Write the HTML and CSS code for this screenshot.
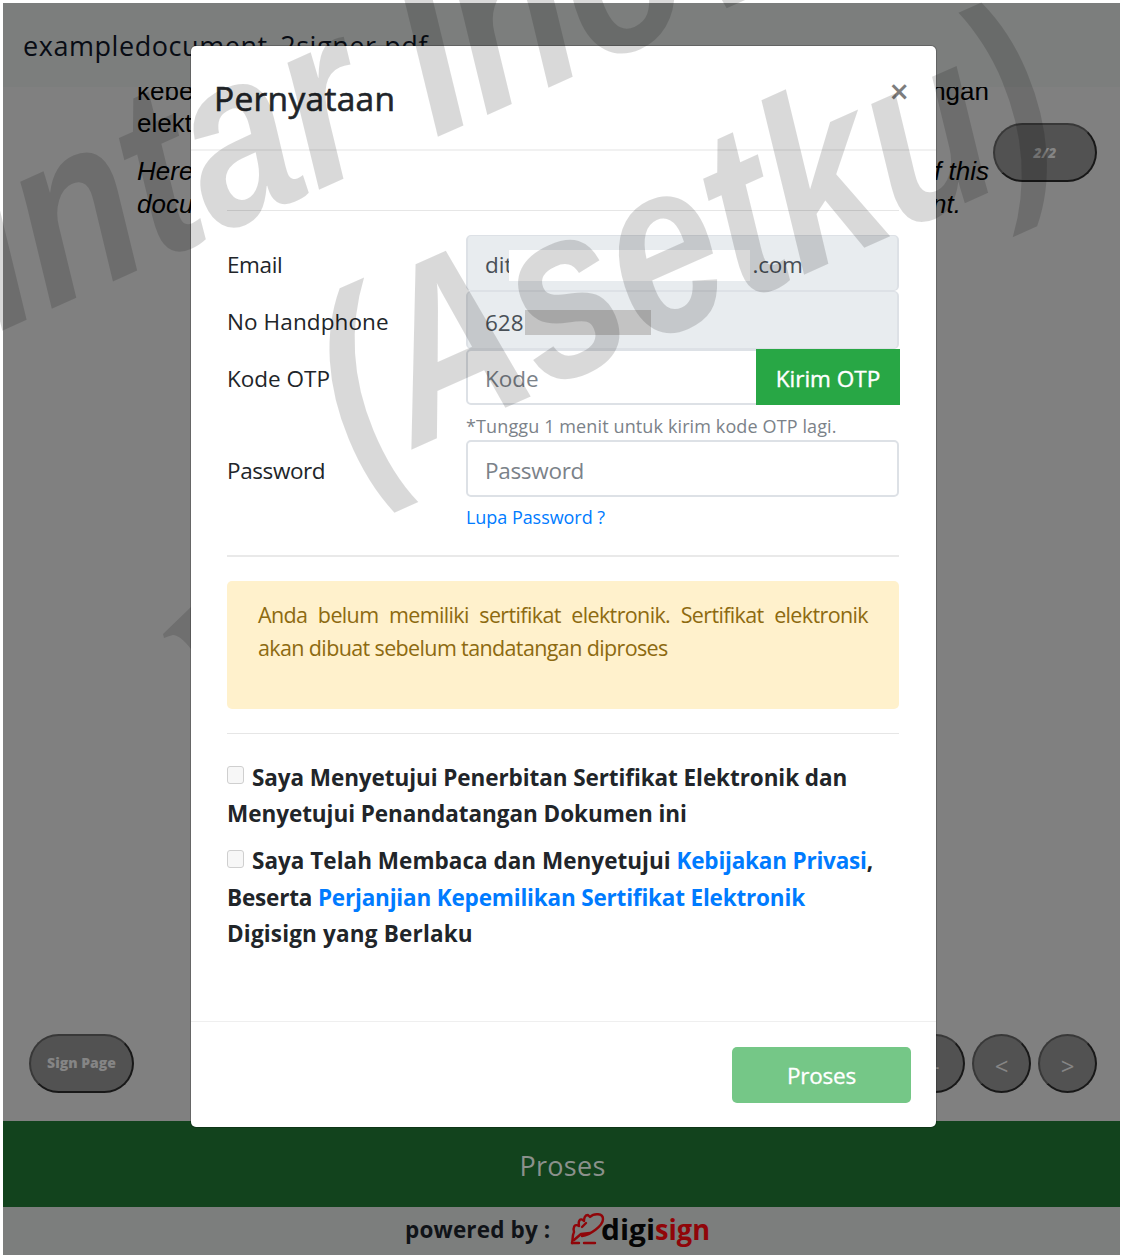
FILE: index.html
```html
<!DOCTYPE html>
<html lang="id">
<head>
<meta charset="utf-8">
<title>Pernyataan</title>
<link rel="stylesheet" href="styles.css">
</head>
<body>
<div class="page">
  <header class="topbar"><span class="filename">exampledocument_2signer.pdf</span></header>
  <main class="viewer">
    <div class="doc">
      <p class="line cut"><span>kebe</span><span>ngan</span></p>
      <p class="line l2"><span>elekt</span></p>
      <p class="line l3 it"><span>Here</span><span>f this</span></p>
      <p class="line l4 it"><span>docu</span><span class="nt">nt.</span></p>
    </div>
    <div class="pill pageno">2/2</div>
    <div class="tools">
      <div class="pill sign">Sign Page</div>
      <div class="group"><div class="pill round">-</div><div class="pill round">&lt;</div><div class="pill round">&gt;</div></div>
    </div>
    <svg class="speck" width="30" height="44" viewBox="0 0 30 44"><path d="M0 28 28 1V43Q17 29 10 29 6 30 1 32Z" fill="#6f6f6f"/></svg>
  </main>
  <div class="process">Proses</div>
  <footer class="powered"><b>powered by :</b>
    <svg class="logo" width="142" height="44" viewBox="0 0 142 44">
      <g fill="none" stroke="#900509" stroke-width="2.4" stroke-linejoin="round" stroke-linecap="round">
        <path d="M12 27C20 26 33 17 33 10 33 4 24 4 20 8L18 6C15 6 14 9 14 12 10 8 8 12 9 17 4 14 3 19 4 23 2 27 3 31 2 34"/>
        <path d="M4 31 11 25 20 24M12 18 16 14M2 34H9M14 34H25"/>
      </g>
      <text x="31" y="31" textLength="54" lengthAdjust="spacingAndGlyphs" fill="#050505">digi</text>
      <text x="85" y="31" textLength="55" lengthAdjust="spacingAndGlyphs" fill="#900509">sign</text>
    </svg>
  </footer>
</div>

<div class="modal">
  <div class="modal-head"><h1>Pernyataan</h1><span class="close">×</span></div>
  <div class="modal-body">
    <hr>
    <div class="form">
      <label class="t-mail">Email</label>
      <div class="field off"><span>dit</span><i class="mask white"></i><span class="com">.com</span></div>
      <label class="t-hp">No Handphone</label>
      <div class="field off second"><span>628</span><i class="mask grey"></i></div>
      <label class="t-otp">Kode OTP</label>
      <div class="field otp"><span class="ph">Kode</span><button class="send">Kirim OTP</button></div>
      <p class="note">*Tunggu 1 menit untuk kirim kode OTP lagi.</p>
      <label class="t-pw">Password</label>
      <div class="field pw"><span class="ph">Password</span></div>
      <p class="forgot"><a>Lupa Password ?</a></p>
    </div>
    <hr class="mid">
    <div class="alert"><div class="a1">Anda belum memiliki sertifikat elektronik. Sertifikat elektronik</div><div class="a2">akan dibuat sebelum tandatangan diproses</div></div>
    <hr class="low">
    <div class="agree">
      <div class="row r1"><i class="box"></i><span>Saya Menyetujui Penerbitan Sertifikat Elektronik dan</span></div>
      <div class="row r2"><span>Menyetujui Penandatangan Dokumen ini</span></div>
      <div class="row r3"><i class="box"></i><span>Saya Telah Membaca dan Menyetujui <a>Kebijakan Privasi</a>,</span></div>
      <div class="row r4"><span>Beserta <a>Perjanjian Kepemilikan Sertifikat Elektronik</a></span></div>
      <div class="row r5"><span>Digisign yang Berlaku</span></div>
    </div>
  </div>
  <div class="modal-foot"><button class="submit">Proses</button></div>
</div>

<svg class="watermark" width="1122" height="1255" viewBox="0 0 1122 1255">
  <g transform="translate(415 448) rotate(-24) skewX(-1.5) scale(1 1.25)">
    <text x="-470" y="-220">Pintar Inovasi</text>
    <text x="-65" y="0">(Asetku)</text>
  </g>
</svg>
</body>
</html>
```
FILE: styles.css
```css
* { box-sizing: border-box; }
html, body { margin: 0; height: 1255px; overflow: hidden; background: #fff; }
body { position: relative; font-family: "Open Sans", "Noto Sans", sans-serif; font-size: 22.5px; color: #212529; }
p, h1 { margin: 0; font-weight: normal; }
button { font: inherit; border: 0; padding: 0; }
a { color: #007bff; }

.page { display: flex; flex-direction: column; height: 1255px; padding: 3px 2px 0 3px; }
.topbar { height: 84px; background: #7c7e7d; padding: 24px 0 0 20px; line-height: 38px; font-size: 27px; letter-spacing: .56px; color: #080c14; }
.viewer { position: relative; display: flex; flex-direction: column; height: 1034px; background: #808080; overflow: hidden; }
.doc { width: 852px; margin-left: 134px; font: 26px/33px "Liberation Sans", sans-serif; color: #000; }
.line { display: flex; justify-content: space-between; height: 33px; }
.cut { margin-top: -12px; }
.l2 { margin-top: -1px; }
.l3 { margin-top: 15px; }
.it { font-style: italic; }
.nt { margin-right: 28px; }
.pill { display: flex; align-items: center; justify-content: center; height: 59px; border: 2px solid; border-color: #383838 #181818 #181818 #383838; border-radius: 30px; background: #525252; color: #858585; font-size: 14px; font-weight: 800; }
.pageno { position: absolute; right: 23px; top: 36px; width: 104px; font-style: italic; }
.tools { display: flex; justify-content: space-between; margin: auto 23px 28px 26px; }
.sign { width: 105px; padding-bottom: 2px; }
.group { display: flex; gap: 7px; }
.round { width: 59px; padding-top: 4px; font-size: 24px; font-weight: 400; }
.speck { position: absolute; left: 160px; top: 519px; }
.process { height: 86px; background: #12431d; color: #8b918c; font-size: 27px; letter-spacing: .3px; line-height: 90px; padding-left: 2px; text-align: center; }
.powered { display: flex; align-items: center; flex: 1; background: #7c7e7d; padding-left: 402px; color: #101318; }
.powered b { width: 165px; padding-bottom: 3px; letter-spacing: .15px; white-space: nowrap; }
.logo text { font: 700 29px "Open Sans", sans-serif; }

.modal { position: absolute; left: 191px; top: 46px; width: 745px; height: 1081px; display: flex; flex-direction: column; background: #fff; border-radius: 5px; box-shadow: 0 0 0 1px rgba(0,0,0,.2); }
.modal-head { display: flex; justify-content: space-between; height: 105px; padding: 28px 27px 0 23px; border-bottom: 2px solid #f1f1f1; }
h1 { font-size: 33.500px; line-height: 48px; letter-spacing: .3px; -webkit-text-stroke: .6px #212529; }
.close { font-size: 34px; line-height: 34px; font-weight: 600; color: #7d7d7d; }
.modal-body { display: flex; flex-direction: column; flex: 1; padding: 59px 37px 0 36px; }
hr { width: 100%; height: 1px; margin: 0; border: 0; background: #e6e6e6; }
.form { display: grid; grid-template-columns: 239px 433px; grid-template-rows: 56px 58px 56px 35px 57px 42px; margin-top: 24px; }
label { align-self: center; white-space: nowrap; padding-top: 2px; }
.t-mail { letter-spacing: -.4px; }
.t-hp { letter-spacing: .1px; }
.t-pw { padding-top: 3px; letter-spacing: -.4px; }
.field { display: flex; align-items: center; padding: 2px 0 0 17px; border: 2px solid #dde1e6; border-radius: 5px; color: #495057; }
.field.off { background: #e8ecef; border-width: 1px 2px; }
.second { padding-top: 4px; }
.field .ph { color: #7b8289; }
.pw .ph { letter-spacing: -.3px; padding-top: 1px; }
.mask { display: block; flex: none; }
.white { width: 241px; height: 31px; margin: 2px 0 0 -3px; background: #fff; }
.com { margin-left: 2px; letter-spacing: -.2px; }
.grey { width: 126px; height: 25px; margin-left: 1px; margin-top: 1px; background: #c3c3c3; }
.send { width: 144px; height: 56px; margin: -2px -3px 0 auto; padding-top: 2px; background: #28a745; color: #fff; -webkit-text-stroke: .4px #fff; }
.note, .forgot { grid-column: 2; font-size: 18px; line-height: 42px; color: #7b8289; white-space: nowrap; }
.note { letter-spacing: .12px; }
.forgot { line-height: 40px; letter-spacing: -.05px; }
.mid { height: 2px; margin-top: 16px; background: #e9e9e9; }
.alert { height: 128px; margin-top: 24px; padding: 17px 31px; border-radius: 5px; background: #fff1cc; color: #8d6a10; font-size: 21.5px; letter-spacing: -.63px; line-height: 33px; white-space: nowrap; }
.a1 { text-align-last: justify; }
.low { margin-top: 24px; }
.agree { display: flex; flex-direction: column; padding-top: 26px; font-weight: 700; line-height: 36px; white-space: nowrap; }
.row { display: flex; height: 36px; }
.r1 { letter-spacing: -.08px; }
.r2 { letter-spacing: -.05px; }
.r3 { margin-top: 11px; letter-spacing: .02px; }
.r3 a { letter-spacing: -.2px; }
.r3 .box { margin-top: 7px; }
.r4 { margin-top: 1px; letter-spacing: -.18px; }
.r5 { letter-spacing: .18px; }
.box { width: 17px; height: 18px; margin: 6px 8px 0 0; border: 1px solid #cfcfcf; border-radius: 3px; background: #f7f7f7; }
.modal-foot { display: flex; justify-content: flex-end; height: 106px; padding: 25px 25px 0 0; border-top: 1px solid #efefef; }
.submit { width: 179px; height: 56px; border-radius: 5px; background: #75c787; color: #fff; letter-spacing: -.2px; -webkit-text-stroke: .3px #fff; }
.watermark { position: absolute; left: 0; top: 0; fill: rgba(0,0,0,.15); stroke: none; font: italic 700 195px "Liberation Sans", sans-serif; pointer-events: none; }
```
